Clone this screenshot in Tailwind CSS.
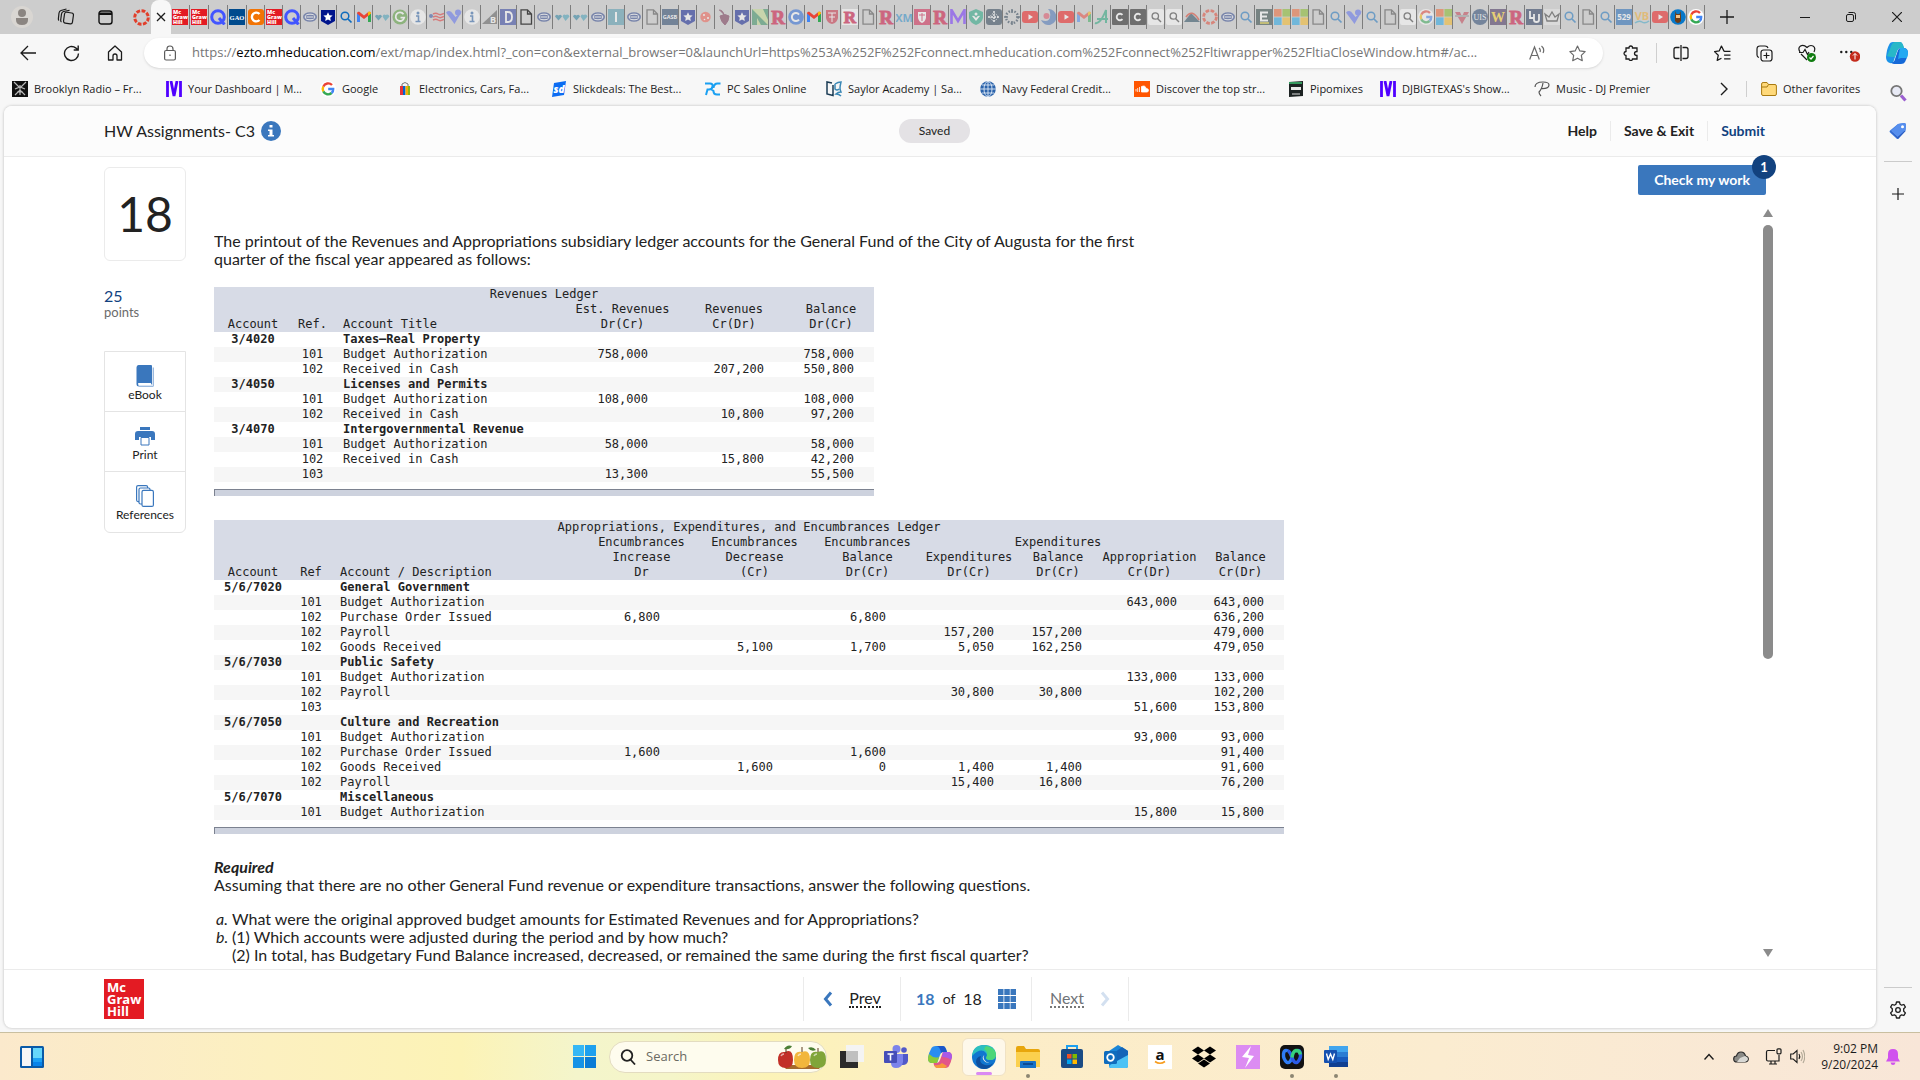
<!DOCTYPE html>
<html lang="en">
<head>
    <meta charset="UTF-8">
    <meta name="viewport" content="width=device-width, initial-scale=1.0">
    <title>HW Assignments- C3</title>
    <script src="https://cdn.jsdelivr.net/npm/@tailwindcss/browser@4"></script>
</head>
<body class="flex h-screen flex-col overflow-hidden bg-[#f7f7f7] font-['Open_Sans',sans-serif] text-[11px] text-[#1b1b1b]">

    <!-- Favicon sprite -->
    <svg class="hidden">
        <symbol id="mgh" viewBox="0 0 16 16"><rect width="16" height="16" fill="#e31b23"/><g fill="#fff" font-family="Open Sans" font-weight="800" font-size="5.4"><text x="1" y="5">Mc</text><text x="1" y="10">Graw</text><text x="1" y="15">Hill</text></g></symbol>
        <symbol id="canvas" viewBox="0 0 16 16"><circle cx="8" cy="8" r="6.4" fill="none" stroke="#e13f2b" stroke-width="2.8" stroke-dasharray="3.6 1.4"/></symbol>
        <symbol id="q" viewBox="0 0 16 16"><circle cx="8" cy="8" r="6.3" fill="none" stroke="#4255ff" stroke-width="3"/><path d="M9 9l5.5 6.5" stroke="#4255ff" stroke-width="3"/></symbol>
        <symbol id="gao" viewBox="0 0 16 16"><rect width="16" height="16" fill="#004b8d"/><text x="8" y="10.5" font-size="6.5" font-weight="700" font-family="Liberation Serif" fill="#fff" text-anchor="middle">GAO</text></symbol>
        <symbol id="corange" viewBox="0 0 16 16"><rect width="16" height="16" rx="3" fill="#f27405"/><path d="M11.5 5A4.4 4.4 0 1 0 11.5 11" fill="none" stroke="#fff" stroke-width="2.4"/></symbol>
        <symbol id="oval" viewBox="0 0 16 16"><ellipse cx="8" cy="8" rx="7" ry="4.8" fill="#27408b"/><ellipse cx="8" cy="8" rx="4.8" ry="2.8" fill="none" stroke="#fff"/><path d="M4.5 8h7" stroke="#fff"/></symbol>
        <symbol id="shield" viewBox="0 0 16 16"><path d="M1 1h14v11l-7 4-7-4z" fill="#00148c"/><path d="M8 3.2l1.4 3 3.2.4-2.4 2.2.6 3.2L8 10.400l-2.800 1.600.6-3.200L3.400 6.600l3.200-.4z" fill="#fff"/></symbol>
        <symbol id="search" viewBox="0 0 16 16"><circle cx="7" cy="7" r="3.800" fill="none" stroke="#0f6cbd" stroke-width="1.500"/><path d="M10 10l3.500 3.500" stroke="#0f6cbd" stroke-width="1.700"/></symbol>
        <symbol id="gmail" viewBox="0 0 16 16"><path d="M1 13V4l3 2v7z" fill="#4285f4"/><path d="M12 13V6l3-2v9z" fill="#34a853"/><path d="M1 4.500C1 2.500 3 2.500 4 3.200L8 6.500l4-3.300c1-.7 3-.7 3 1.300L12 7 8 10 4 7z" fill="#ea4335"/><path d="M12 3.200c1-.7 3-.7 3 1.300L12 7z" fill="#fbbc04"/></symbol>
        <symbol id="hearts" viewBox="0 0 16 16"><path d="M4.500 11.500L1 7.500Q2 4.500 4.500 6.500 7 4.500 8 7.500z" fill="#1d7a9c"/><path d="M11.500 12L8.500 7.500Q9.500 4.500 11.500 6 14.500 4.500 15.500 7.500z" fill="#3b9bb5"/></symbol>
        <symbol id="gg" viewBox="0 0 16 16"><circle cx="8" cy="8" r="7.500" fill="#4e9a2f"/><path d="M11.500 5.200A4.300 4.300 0 1 0 12.200 8.600H8.500" fill="none" stroke="#fff" stroke-width="1.800"/></symbol>
        <symbol id="ic" viewBox="0 0 16 16"><circle cx="8" cy="8" r="7.800" fill="#fff"/><circle cx="8" cy="4" r="1.500" fill="#265fa8"/><path d="M6 7h2.500v5.500M5.500 12.500h5" stroke="#265fa8" stroke-width="1.600" fill="none"/></symbol>
        <symbol id="flag" viewBox="0 0 16 16"><path d="M5 5q3-1.500 5 0t6-.500M5 8q3-1.500 5 0t6-.500M5 11q3-1.500 5 0t6-.500" stroke="#e02b2b" stroke-width="1.500" fill="none"/><circle cx="3" cy="7" r="2" fill="#2b4ba0"/></symbol>
        <symbol id="vp" viewBox="0 0 16 16"><path d="M0 3.500Q4 0 7 5l2.500 3L16 2 8.500 15z" fill="#5468f0"/><circle cx="12" cy="3.500" r="3" fill="#5468f0"/></symbol>
        <symbol id="tri" viewBox="0 0 16 16"><path d="M15 1v14H0z" fill="#555"/><text x="8" y="14" font-size="9" font-weight="700" fill="#fff">B</text></symbol>
        <symbol id="dd" viewBox="0 0 16 16"><rect width="16" height="16" fill="#26389c"/><path d="M5 3h3q4 0 4 5t-4 5H6V3" fill="none" stroke="#fff" stroke-width="1.800"/></symbol>
        <symbol id="doc" viewBox="0 0 16 16"><path d="M3 .8h6.500L13.500 5v10.200H3zM9.500.8V5h4" fill="none" stroke="#444" stroke-width="1.300"/></symbol>
        <symbol id="ii" viewBox="0 0 16 16"><rect width="16" height="16" fill="#4c97ad"/><path d="M8 3v10" stroke="#fff" stroke-width="2"/></symbol>
        <symbol id="gasb" viewBox="0 0 16 16"><rect width="16" height="16" fill="#1c3c63"/><text x="8" y="10" font-size="5.500" font-weight="700" fill="#fff" text-anchor="middle">GASB</text></symbol>
        <symbol id="cookie" viewBox="0 0 16 16"><circle cx="7.500" cy="8" r="5.200" fill="#f2594b"/><circle cx="6" cy="6" r="1" fill="#fff"/><circle cx="10" cy="9" r="1" fill="#fff"/><circle cx="6.500" cy="10.500" r=".8" fill="#fff"/></symbol>
        <symbol id="grapes" viewBox="0 0 16 16"><path d="M4 7q5-3 9 0 0 5-4 9-4-3-5-9zM3 1q4 0 5 5" fill="#702b4c" stroke="#702b4c"/></symbol>
        <symbol id="nn" viewBox="0 0 16 16"><rect width="16" height="16" fill="#c4dc8c"/><path d="M0 0l16 16H9L5 9v7H0zM11 0h5v11z" fill="#2f8a5b"/></symbol>
        <symbol id="rr" viewBox="0 0 16 16"><text x="8" y="15" font-size="19" font-weight="700" font-family="Liberation Serif" fill="#cc0033" stroke="#cc0033" text-anchor="middle">R</text></symbol>
        <symbol id="rbox" viewBox="0 0 16 16"><rect width="16" height="16" fill="#fff"/><text x="8" y="14" font-size="17" font-weight="700" font-family="Liberation Serif" fill="#cc0033" stroke="#cc0033" text-anchor="middle">R</text></symbol>
        <symbol id="cblue" viewBox="0 0 16 16"><circle cx="8" cy="8" r="7.800" fill="#1f63d8"/><path d="M11 5.500A4 4 0 1 0 11 10.500" stroke="#fff" stroke-width="2" fill="none"/></symbol>
        <symbol id="crest" viewBox="0 0 16 16"><path d="M2 1h12v8q-1 5-6 6-5-1-6-6z" fill="#c8233c"/><path d="M4 4h8M8 4v9M5 8h6" stroke="#fff"/></symbol>
        <symbol id="crestbox" viewBox="0 0 16 16"><rect width="16" height="16" fill="#cf1747"/><path d="M4 3h8v6q-1 4-4 5-3-1-4-5z" fill="#fff"/><path d="M5 6h6M8 4v8" stroke="#cf1747"/></symbol>
        <symbol id="xm" viewBox="0 0 16 16"><text x="8" y="12.500" font-size="11" font-weight="700" fill="#1e88c9" text-anchor="middle">XM</text></symbol>
        <symbol id="mm" viewBox="0 0 16 16"><path d="M1.500 15V1l6.500 11L14.500 1v14" stroke="#6a23ff" stroke-width="2.600" fill="none"/></symbol>
        <symbol id="mixcloud" viewBox="0 0 16 16"><path d="M1.500 16V0M5 0l3 15 3-15M14.500 0v16" stroke="#5000ff" stroke-width="2.800" fill="none"/></symbol>
        <symbol id="tshield" viewBox="0 0 16 16"><path d="M8 0l7 3v6q-1 5-7 7-6-2-7-7V3z" fill="#1aa27c"/><path d="M8 12L4 7q2-1 4 2 2-3 4-2z" fill="#fff"/><circle cx="8" cy="5" r="1.500" fill="#fff"/></symbol>
        <symbol id="compassbox" viewBox="0 0 16 16"><rect width="16" height="16" rx="3" fill="#22384d"/><path d="M8 2v12M2 8h12" stroke="#fff" stroke-width="1.500" stroke-dasharray="2 1"/><circle cx="8" cy="8" r="3.500" fill="none" stroke="#fff" stroke-dasharray="1 1"/></symbol>
        <symbol id="compass" viewBox="0 0 16 16"><circle cx="8" cy="8" r="6" fill="none" stroke="#22384d" stroke-width="2.400" stroke-dasharray="1.500 1.500"/><path d="M8 0v4M8 12v4M0 8h4M12 8h4" stroke="#22384d" stroke-width="1.500"/></symbol>
        <symbol id="yt" viewBox="0 0 16 16"><rect y="2" width="16" height="12" rx="3" fill="#f00c0c"/><path d="M6.500 5.200L11 8l-4.500 2.800z" fill="#fff"/></symbol>
        <symbol id="swirl" viewBox="0 0 16 16"><path d="M8 0a8 8 0 1 1-7 11q8 3 9-3t-2-8z" fill="#3f6cb5"/><circle cx="6.500" cy="7" r="3" fill="#e0495e"/></symbol>
        <symbol id="aa" viewBox="0 0 16 16"><path d="M1 14q5 2 11-13v13M3 10h11" stroke="#19a074" stroke-width="2" fill="none"/></symbol>
        <symbol id="cdark" viewBox="0 0 16 16"><rect width="16" height="16" rx="1" fill="#111"/><path d="M10.500 5.800A3.300 3.300 0 1 0 10.500 10.200" stroke="#fff" stroke-width="1.900" fill="none"/></symbol>
        <symbol id="sbox" viewBox="0 0 16 16"><rect width="16" height="16" rx="2" fill="#fff"/><circle cx="7.300" cy="7" r="3.200" fill="none" stroke="#333" stroke-width="1.300"/><path d="M9.500 9.500l3.500 3.500" stroke="#333" stroke-width="1.400"/></symbol>
        <symbol id="mount" viewBox="0 0 16 16"><path d="M0 13L7 4l9 9z" fill="#1c4257"/><path d="M2 8q6-9 13 3" stroke="#dc3520" stroke-width="1.500" fill="none"/></symbol>
        <symbol id="ee" viewBox="0 0 16 16"><rect width="16" height="16" fill="#233b3a"/><path d="M12 3.500H5v8h7M5 7.500h6" stroke="#fff" stroke-width="2" fill="none"/><path d="M4 14h9" stroke="#e8d51f" stroke-width="1.500"/></symbol>
        <symbol id="ms" viewBox="0 0 16 16"><path fill="#f0602c" d="M0 0h7.600v7.600H0z"/><path fill="#80b81c" d="M8.400 0H16v7.600H8.400z"/><path fill="#18a3e8" d="M0 8.400h7.600V16H0z"/><path fill="#fab819" d="M8.400 8.400H16V16H8.400z"/></symbol>
        <symbol id="google" viewBox="0 0 16 16"><circle cx="8" cy="8" r="8" fill="#fff"/><g fill="none" stroke-width="2.400"><path d="M12 4A5.300 5.300 0 0 0 3.300 5.600" stroke="#ea4335"/><path d="M3.300 5.600a5.300 5.300 0 0 0 0 4.800" stroke="#fbbc05"/><path d="M3.300 10.400a5.300 5.300 0 0 0 8.300 1.600" stroke="#34a853"/><path d="M11.600 12A5 5 0 0 0 13.200 8H8.200" stroke="#4285f4"/></g></symbol>
        <symbol id="vred" viewBox="0 0 16 16"><path d="M1 3h5l2 5 2-5h5L8 15z" fill="#c23a4c"/><path d="M1 7h14" stroke="#999" stroke-width="2"/></symbol>
        <symbol id="uis" viewBox="0 0 16 16"><circle cx="8" cy="8" r="8" fill="#1d3e6b"/><text x="8" y="11" font-size="8" font-family="Liberation Serif" fill="#fff" text-anchor="middle">UIS</text></symbol>
        <symbol id="ww" viewBox="0 0 16 16"><rect width="16" height="16" fill="#3a2355"/><text x="8" y="13" font-size="14" font-weight="700" font-family="Liberation Serif" fill="#ffd21f" text-anchor="middle">W</text></symbol>
        <symbol id="lu" viewBox="0 0 16 16"><rect width="16" height="16" fill="#182c53"/><path d="M4 2v7h4M8 5v6q0 2 2.500 2T13 11V5" stroke="#fff" stroke-width="1.800" fill="none"/></symbol>
        <symbol id="crown" viewBox="0 0 16 16"><rect width="16" height="16" fill="#e8e8e8"/><path d="M3 12L1 5l4 3 3-5 3 5 4-3-2 7z" fill="none" stroke="#333" stroke-width="1.300"/></symbol>
        <symbol id="n529" viewBox="0 0 16 16"><rect width="16" height="16" fill="#1461b5"/><text x="8" y="11" font-size="8" font-weight="700" fill="#fff" text-anchor="middle">529</text></symbol>
        <symbol id="vb" viewBox="0 0 16 16"><text x="8" y="11" font-size="11" font-weight="700" fill="#f3aa28" text-anchor="middle">VB</text><path d="M1 14q4-3 7-1t7-1" stroke="#3ba6c9" stroke-width="1.500" fill="none"/></symbol>
        <symbol id="face" viewBox="0 0 16 16"><circle cx="8" cy="8" r="7.800" fill="#0878c9"/><path d="M5.500 2l1 3h3l1-3 .5 5v5q-3 4-6 0V7z" fill="#6e3d16"/><path d="M6 6h4v3H6z" fill="#f0c38a"/></symbol>
    </svg>

    <!-- Tab strip -->
    <header class="flex h-[34px] shrink-0 items-stretch bg-[#cdcdcd]">
        <div class="flex w-[131px] items-center justify-between pr-[18px] pl-[11px]">
            <button aria-label="Profile"><svg class="size-[22px]" viewBox="0 0 22 22"><circle cx="11" cy="11" r="11" fill="#d9d6d2"/><circle cx="11" cy="7" r="4" fill="#8b8581"/><path d="M5 12h12v2q0 5-6 5t-6-5z" fill="#8b8581"/></svg></button>
            <button aria-label="Workspaces"><svg class="size-[18px]" viewBox="0 0 18 18" fill="none" stroke="#1b1b1b" stroke-width="1.200"><rect x="7" y="4.500" width="9" height="11" rx="2" transform="rotate(8 11 10)"/><path d="M4.500 14q-1-.500-.8-2l.8-6q.3-2 2-2.500l6-1.200M2 12.500q-.8-.5-.6-2L2 5q.3-2 2-2.500L9.500 1"/></svg></button>
            <button aria-label="Tab actions"><svg class="size-[15px]" viewBox="0 0 15 15"><rect x="1" y="1" width="13" height="13" rx="2.500" fill="none" stroke="#111" stroke-width="1.400"/><path d="M1 2.500h13v2.500H1zM1 5h2.500v0H1z" fill="#111"/><path d="M4.500 5v0" stroke="#111"/></svg></button>
        </div>
        <button class="flex w-5 items-center justify-center border-l border-transparent" aria-label="Canvas"><svg class="size-[17px]"><use href="#canvas"/></svg></button>
        <button class="flex w-5 items-center justify-center rounded-t-lg bg-[#f7f7f7]" aria-label="Close tab"><svg class="size-2.5" viewBox="0 0 10 10" stroke="#1b1b1b" stroke-width="1.300"><path d="M1 1l8 8M9 1L1 9"/></svg></button>
        <nav id="tabs" class="flex items-center"></nav>
        <button class="ml-3 flex w-5 items-center justify-center" aria-label="New tab"><svg class="size-3.5" viewBox="0 0 14 14" stroke="#1b1b1b" stroke-width="1.300"><path d="M7 0v14M0 7h14"/></svg></button>
        <div class="ml-auto flex">
            <button class="flex w-[46px] items-center justify-center" aria-label="Minimize"><svg class="w-2.5" viewBox="0 0 10 10" stroke="#1b1b1b"><path d="M0 5.500h10"/></svg></button>
            <button class="flex w-[46px] items-center justify-center" aria-label="Restore"><svg class="w-2.5" viewBox="0 0 10 10" fill="none" stroke="#1b1b1b"><rect x=".5" y="2.500" width="7" height="7" rx="1.500"/><path d="M2.500.5h5q2 0 2 2v5"/></svg></button>
            <button class="flex w-[46px] items-center justify-center" aria-label="Close"><svg class="w-2.5" viewBox="0 0 10 10" stroke="#1b1b1b" stroke-width="1.200"><path d="M0 0l10 10M10 0L0 10"/></svg></button>
        </div>
    </header>

    <!-- Toolbar -->
    <div class="flex h-[38px] shrink-0 items-center">
        <div class="flex w-36 items-center gap-[27px] pl-5">
            <button aria-label="Back"><svg class="size-4" viewBox="0 0 16 16" fill="none" stroke="#1b1b1b" stroke-width="1.300"><path d="M16 8H1M8 1L1 8l7 7"/></svg></button>
            <button aria-label="Refresh"><svg class="size-[17px]" viewBox="0 0 17 17" fill="none" stroke="#1b1b1b" stroke-width="1.400"><path d="M15.500 8.500A7 7 0 1 1 13 3.100L15 5M15.200.5V5h-4.500"/></svg></button>
            <button aria-label="Home"><svg class="size-4" viewBox="0 0 16 16" fill="none" stroke="#1b1b1b" stroke-width="1.300"><path d="M1.500 7L8 1l6.500 6v8H10v-4q0-2-2-2t-2 2v4H1.500z" stroke-linejoin="round"/></svg></button>
        </div>
        <div class="flex h-[30px] min-w-0 flex-1 items-center rounded-full bg-white pr-[17px] pl-5 shadow-sm">
            <svg class="mr-4 h-4 w-3" viewBox="0 0 12 16" fill="none" stroke="#5b5b5b" stroke-width="1.200"><rect x=".6" y="5.500" width="10.800" height="9.500" rx="1.500"/><path d="M3 5.500V4q0-3 3-3t3 3v1.500M6 9.500v1.500"/></svg>
            <div class="min-w-0 flex-1 truncate text-[13px] text-[#767676]">https://<span class="text-black">ezto.mheducation.com</span>/ext/map/index.html?_con=con&amp;external_browser=0&amp;launchUrl=https%253A%252F%252Fconnect.mheducation.com%252Fconnect%252Fltiwrapper%252FltiaCloseWindow.htm#/ac...</div>
            <button class="mr-6" aria-label="Read aloud"><svg class="size-4" viewBox="0 0 16 16" fill="none" stroke="#6a6a6a" stroke-width="1.200"><path d="M.7 14.500L5.500 2l4.800 12.500M2.300 10.500h6.400M10 3q2 1.500 1 4M12.500 1q3.500 3 1.500 7"/></svg></button>
            <button aria-label="Favorite"><svg class="size-[17px]" viewBox="0 0 16 16" fill="none" stroke="#6a6a6a" stroke-width="1.100" stroke-linejoin="round"><path d="M8 1l2.200 4.600 5 .7-3.600 3.500.9 5L8 12.400l-4.500 2.400.9-5L.8 6.300l5-.7z"/></svg></button>
        </div>
        <div class="flex w-[317px] items-center justify-between pr-[11px] pl-5">
            <button aria-label="Extensions"><svg class="size-4" viewBox="0 0 16 16" fill="none" stroke="#1b1b1b" stroke-width="1.300"><path d="M3 3h3q0-2 1.800-2T9.500 3H14v3.500q-2.500 0-2.500 2t2.500 2V14H9.500q0 1.500-1.700 1.500T6 14H3v-3.500q-2-.2-2-2t2-2z"/></svg></button>
            <span class="h-5 w-px bg-[#cfcfcf]"></span>
            <button aria-label="Split screen"><svg class="size-4" viewBox="0 0 16 16" fill="none" stroke="#1b1b1b" stroke-width="1.300"><path d="M6.500 2.500H3q-2 0-2 2v7q0 2 2 2h3.500M9.500 2.500H13q2 0 2 2v7q0 2-2 2H9.500M8 0v16"/></svg></button>
            <button class="ml-2" aria-label="Favorites"><svg class="size-[17px]" viewBox="0 0 16 16" fill="none" stroke="#1b1b1b" stroke-width="1.200" stroke-linejoin="round"><path d="M9.500 6L7 1 5 5.500l-4.500.700L4 9.700 3 14.500l4-2M9.500 6H15.500M9.500 9.500h6M9.500 13h6"/></svg></button>
            <button class="ml-2" aria-label="Collections"><svg class="size-[17px]" viewBox="0 0 17 17" fill="none" stroke="#1b1b1b" stroke-width="1.200"><rect x="5" y="5" width="11" height="11" rx="2.500"/><path d="M10.500 7.500v6M7.500 10.500h6M3 12.500q-2-.5-2-2.500V4q0-3 3-3h5q2.500 0 3 2"/></svg></button>
            <button class="relative ml-2" aria-label="Browser essentials"><svg class="size-[18px]" viewBox="0 0 18 18" fill="none" stroke="#1b1b1b" stroke-width="1.200"><path d="M2 8Q-.5 4 2.500 2T9 3.500Q12 .5 15 2t1 6M1 8.500h4L7 5.500l2.500 5L11 8M3 10l6 6"/><circle cx="13.500" cy="13.500" r="4.500" fill="#107c10" stroke="none"/><path d="M11.500 13.500l1.500 1.500 2.500-3" stroke="#fff"/></svg></button>
            <button class="ml-2" aria-label="More"><svg class="h-[17px] w-5" viewBox="0 0 20 17"><g fill="#1b1b1b"><circle cx="1.300" cy="7" r="1.200"/><circle cx="6.300" cy="7" r="1.200"/><circle cx="11.300" cy="7" r="1.200"/></g><circle cx="15" cy="11.500" r="5.200" fill="#c42b1c"/><path d="M15 14.500v-6M13 10.500l2-2 2 2" fill="none" stroke="#fff"/></svg></button>
            <button class="ml-2" aria-label="Copilot"><svg class="size-6" viewBox="0 0 24 24"><path d="M8 1h7q2 0 3 3l1 3h-4q-2 0-3 3L9 19q-1 4-4 3-4-1-4-6 1-9 3-12 1-3 4-3z" fill="#1b93e8"/><path d="M5 8q2-7 5-7h5q2 0 3 3l1 3h-4q-2 0-3 3l-2 6q-6 0-8-1z" fill="#28b8c8"/><path d="M16 23H9q-2 0-3-2 3 1 4-3l3-9q1-2 3-2h4q3 1 3 5-1 6-3 9-1 2-4 2z" fill="#1569d8"/><path d="M15 7h4q4 1 4 5 0 2-1 5h-6l-3 1z" fill="#23a9f2"/></svg></button>
        </div>
    </div>

    <div class="flex min-h-0 flex-1">
        <div class="flex min-w-0 flex-1 flex-col">
            <!-- Bookmarks bar -->
            <nav class="flex h-[34px] shrink-0 items-center pl-3 [&>a]:flex [&>a]:w-[154px] [&>a]:items-center [&>a]:gap-1.5 [&>a]:whitespace-nowrap [&_svg]:size-4 [&_svg]:shrink-0">
                <a href="#"><svg viewBox="0 0 16 16"><rect width="16" height="16" fill="#111"/><path d="M2 1l6 6 6-6M3 8l5-2 5 2M3 14l5-5 5 5M8 4v10M5 11h6" stroke="#bbb" stroke-width="1.200" fill="none"/></svg>Brooklyn Radio – Fr...</a>
                <a href="#"><svg><use href="#mixcloud"/></svg>Your Dashboard | M...</a>
                <a href="#" class="w-[77px]!"><svg><use href="#google"/></svg>Google</a>
                <a href="#"><svg viewBox="0 0 16 16"><path d="M5 5V3q3-3 6 0v2" fill="none" stroke="#777"/><path d="M3 5h3v9H3z" fill="#e53238"/><path d="M6 5h2.500v9H6z" fill="#0064d2"/><path d="M8.500 5H11v9H8.500z" fill="#f5af02"/><path d="M11 5h2v9h-2z" fill="#86b817"/></svg>Electronics, Cars, Fa...</a>
                <a href="#"><svg viewBox="0 0 16 16"><path d="M3 2l12-2-2 14-12 2z" fill="#0c6cf2"/><text x="8" y="12" font-size="10" font-weight="800" font-style="italic" fill="#fff" text-anchor="middle">sd</text></svg>Slickdeals: The Best...</a>
                <a href="#" class="w-[121px]!"><svg viewBox="0 0 16 16"><path d="M0 2.500h5q3 0 2.500 3T4 8.500H2.500L1 14M15.500 2.500h-3q-3.500 0-4 4.500M15 13.500h-3q-3.500 0-3.500-3.500L6 8" stroke="#1aa0f2" stroke-width="2" fill="none"/></svg>PC Sales Online</a>
                <a href="#"><svg viewBox="0 0 16 16" fill="none" stroke-width="1.500"><path d="M6 2L1 1v12l6 1.500V4" stroke="#1b3c55"/><path d="M9 3q3-2 6-2-1 4-1 6t1 4q-3 0-5 2 3 0 5 2M9 3v5q2 2 4 0" stroke="#3b88b5"/></svg>Saylor Academy | Sa...</a>
                <a href="#"><svg viewBox="0 0 16 16"><circle cx="8" cy="8" r="7.800" fill="#2b63ab"/><path d="M8 0v16M0 8h16M2 4h12M2 12h12" stroke="#dce8f5" stroke-width=".9"/><ellipse cx="8" cy="8" rx="4" ry="7.500" fill="none" stroke="#dce8f5" stroke-width=".9"/></svg>Navy Federal Credit...</a>
                <a href="#"><svg viewBox="0 0 16 16"><rect width="16" height="16" fill="#ff5500"/><path d="M7.500 5.500q4-1.500 4.500 2 2.500 0 2.500 1.700T13 11H7.500zM2 8v2.500M3.700 7v4M5.500 6v5" fill="#fff" stroke="#fff" stroke-width=".8"/></svg>Discover the top str...</a>
                <a href="#" class="w-[92px]!"><svg viewBox="0 0 16 16"><path d="M1 1l14-1v15L1 16z" fill="#1c2222"/><path d="M1 2h13" stroke="#3dbf72" stroke-width="1.500"/><path d="M3 6h10v3H3z" fill="#e8e8e8"/><path d="M4 13h8" stroke="#ddd"/></svg>Pipomixes</a>
                <a href="#"><svg><use href="#mixcloud"/></svg>DJBIGTEXAS's Show...</a>
                <a href="#"><svg viewBox="0 0 16 16" fill="none" stroke="#555" stroke-width="1.200"><path d="M1 6Q1 1 9 1q6 0 6 3 0 4-8 3.500M9 2Q8 8 5 11q0 2 2 4"/></svg>Music - DJ Premier</a>
                <button class="ml-auto" aria-label="More bookmarks"><svg viewBox="0 0 16 16" fill="none" stroke="#1b1b1b" stroke-width="1.400"><path d="M5 2l6 6-6 6"/></svg></button>
                <span class="mx-3.5 h-4 w-px bg-[#cfcfcf]"></span>
                <a href="#" class="w-[115px]!"><svg viewBox="0 0 16 16"><path d="M.6 3q0-1.500 1.500-1.500H6L7.500 3.500H14q1.400 0 1.400 1.500v8q0 1.500-1.400 1.500H2q-1.400 0-1.400-1.500z" fill="#ffd97a" stroke="#a97a10"/><path d="M.6 6H6l1.500-2.500" fill="none" stroke="#a97a10"/></svg>Other favorites</a>
            </nav>

            <!-- Page -->
            <main class="mb-1 ml-1 flex min-h-0 flex-1 flex-col overflow-hidden rounded-lg bg-white font-['Lato',sans-serif] text-base text-[#222] shadow-[0_0_3px_rgba(0,0,0,0.25)]">
                <div class="flex h-[51px] shrink-0 items-center border-b border-[#ebebeb] bg-[#fcfcfc] pr-[111px] pl-[100px]">
                    <div class="flex flex-1 items-center gap-1.5">
                        <h1>HW Assignments- C3</h1>
                        <svg class="size-5" viewBox="0 0 20 20"><circle cx="10" cy="10" r="10" fill="#3a77bd"/><path d="M8.500 4h3v2.500h-3zM7 8.500h4.500v5.500H13v1.500H7V14h1.500v-4H7z" fill="#fff"/></svg>
                    </div>
                    <span class="rounded-full bg-[#e4e2e5] px-5 py-1 text-xs leading-4">Saved</span>
                    <div class="flex flex-1 items-center justify-end gap-[13px] text-sm font-bold">
                        <a href="#">Help</a>
                        <span class="h-5 w-px bg-[#ebebeb]"></span>
                        <a href="#">Save &amp; Exit</a>
                        <span class="h-5 w-px bg-[#ebebeb]"></span>
                        <a href="#" class="text-[#12427f]">Submit</a>
                    </div>
                </div>

                <div class="flex min-h-0 flex-1 pr-[101px] pl-[100px]">
                    <!-- Question rail -->
                    <aside class="w-[82px] shrink-0 pt-2.5">
                        <div class="flex h-[94px] items-center justify-center rounded-md border border-[#ebebeb] text-5xl">18</div>
                        <div class="mt-[27px] text-base leading-4 text-[#12427f]">25</div>
                        <div class="text-[13px] leading-4 text-[#6b6b6b]">points</div>
                        <div class="mt-[31px] divide-y divide-[#e4e4e4] rounded-b-md border border-[#e4e4e4] text-xs [&>button]:flex [&>button]:h-[60px] [&>button]:w-full [&>button]:flex-col [&>button]:items-center [&>button]:justify-center [&>button]:pt-1">
                            <button><svg class="h-[22px] w-[18px]" viewBox="0 0 18 22"><path d="M2.500 0H15q1 0 1 1v17H3q-1 0-1 1t1 1h13M17.500 2.500V21.500H3Q.5 21.500.5 19V2.500Q.5 0 2.500 0z" fill="#3a77bd"/><path d="M2.500 18.500H15M2.500 20.500H16M16.500 1v20" stroke="#fff" stroke-width=".8"/></svg>eBook</button>
                            <button><svg class="h-[22px] w-5" viewBox="0 0 20 22"><path d="M5 2h10v3H5zM0 9q0-3 3-3h14q3 0 3 3v6h-4v-3H4v3H0z" fill="#3a77bd"/><path d="M6 12.500h8V20H6z" fill="#fff" stroke="#3a77bd"/></svg>Print</button>
                            <button><svg class="h-[22px] w-[18px]" viewBox="0 0 18 22" fill="#fff" stroke="#3a77bd" stroke-width="1.200"><rect x=".6" y=".6" width="11" height="16" rx="1.500"/><rect x="3" y="3" width="11" height="16" rx="1.500"/><rect x="6" y="5.400" width="11.400" height="16" rx="1.500"/></svg>References</button>
                        </div>
                    </aside>

                    <div class="flex min-w-0 flex-1 flex-col pl-7">
                        <div class="flex shrink-0 justify-end pt-2 pr-[9px]">
                            <button class="relative h-[30px] rounded-xs bg-[#3a77bd] px-4 text-sm font-bold text-white">Check my work<span class="absolute -top-2.5 -right-2.5 flex size-6 items-center justify-center rounded-full bg-[#12427f] text-[13px]">1</span></button>
                        </div>
                        <div class="flex min-h-0 flex-1 pt-2">
                            <article class="min-w-0 flex-1 overflow-hidden pt-[29px] leading-[18px]">
                                <p class="max-w-[940px]">The printout of the Revenues and Appropriations subsidiary ledger accounts for the General Fund of the City of Augusta for the first quarter of the fiscal year appeared as follows:</p>

                                <table class="mt-[19px] w-[660px] table-fixed font-['DejaVu_Sans_Mono',monospace] text-xs leading-[15px] whitespace-nowrap [&_tbody_td:nth-child(-n+2)]:text-center [&_tbody_td:nth-child(3)]:pl-2.5 [&_tbody_td:nth-child(4)]:pr-8 [&_tbody_td:nth-child(5)]:pr-6 [&_tbody_td:nth-child(6)]:pr-5 [&_tbody_td:nth-child(n+4)]:text-right [&_th]:font-normal [&_tr]:h-[15px]">
                                    <colgroup><col class="w-[78px]"><col class="w-[41px]"><col class="w-[232px]"><col class="w-[115px]"><col class="w-[108px]"><col class="w-[86px]"></colgroup>
                                    <thead class="bg-[#d7dbe6]">
                                        <tr><th colspan="6">Revenues Ledger</th></tr>
                                        <tr><th></th><th></th><th></th><th>Est. Revenues</th><th>Revenues</th><th>Balance</th></tr>
                                        <tr><th>Account</th><th>Ref.</th><th class="pl-2.5 text-left">Account Title</th><th>Dr(Cr)</th><th>Cr(Dr)</th><th>Dr(Cr)</th></tr>
                                    </thead>
                                    <tbody class="[&>tr:nth-child(even)]:bg-[#f6f6f6]">
                                        <tr class="font-bold"><td>3/4020</td><td></td><td>Taxes—Real Property</td><td></td><td></td><td></td></tr>
                                        <tr><td></td><td>101</td><td>Budget Authorization</td><td>758,000</td><td></td><td>758,000</td></tr>
                                        <tr><td></td><td>102</td><td>Received in Cash</td><td></td><td>207,200</td><td>550,800</td></tr>
                                        <tr class="font-bold"><td>3/4050</td><td></td><td>Licenses and Permits</td><td></td><td></td><td></td></tr>
                                        <tr><td></td><td>101</td><td>Budget Authorization</td><td>108,000</td><td></td><td>108,000</td></tr>
                                        <tr><td></td><td>102</td><td>Received in Cash</td><td></td><td>10,800</td><td>97,200</td></tr>
                                        <tr class="font-bold"><td>3/4070</td><td></td><td>Intergovernmental Revenue</td><td></td><td></td><td></td></tr>
                                        <tr><td></td><td>101</td><td>Budget Authorization</td><td>58,000</td><td></td><td>58,000</td></tr>
                                        <tr><td></td><td>102</td><td>Received in Cash</td><td></td><td>15,800</td><td>42,200</td></tr>
                                        <tr><td></td><td>103</td><td></td><td>13,300</td><td></td><td>55,500</td></tr>
                                    </tbody>
                                </table>
                                <div class="mt-[7px] h-[7px] w-[660px] border-t border-l border-[#7c8290] bg-[#cdd2de]"></div>

                                <table class="mt-6 w-[1070px] table-fixed font-['DejaVu_Sans_Mono',monospace] text-xs leading-[15px] whitespace-nowrap [&_tbody_td:nth-child(-n+2)]:text-center [&_tbody_td:nth-child(3)]:pl-2.5 [&_tbody_td:nth-child(n+4)]:pr-[38px] [&_tbody_td:nth-child(n+4)]:text-right [&_tbody_td:nth-child(n+7)]:pr-5 [&_th]:font-normal [&_tr]:h-[15px]">
                                    <colgroup><col class="w-[78px]"><col class="w-[38px]"><col class="w-[255px]"><col class="w-[113px]"><col class="w-[113px]"><col class="w-[113px]"><col class="w-[90px]"><col class="w-[88px]"><col class="w-[95px]"><col class="w-[87px]"></colgroup>
                                    <thead class="bg-[#d7dbe6]">
                                        <tr><th colspan="10">Appropriations, Expenditures, and Encumbrances Ledger</th></tr>
                                        <tr><th></th><th></th><th></th><th>Encumbrances</th><th>Encumbrances</th><th>Encumbrances</th><th></th><th>Expenditures</th><th></th><th></th></tr>
                                        <tr><th></th><th></th><th></th><th>Increase</th><th>Decrease</th><th>Balance</th><th>Expenditures</th><th>Balance</th><th>Appropriation</th><th>Balance</th></tr>
                                        <tr><th>Account</th><th>Ref</th><th class="pl-2.5 text-left">Account / Description</th><th>Dr</th><th>(Cr)</th><th>Dr(Cr)</th><th>Dr(Cr)</th><th>Dr(Cr)</th><th>Cr(Dr)</th><th>Cr(Dr)</th></tr>
                                    </thead>
                                    <tbody class="[&>tr:nth-child(even)]:bg-[#f6f6f6]">
                                        <tr class="font-bold"><td>5/6/7020</td><td></td><td>General Government</td><td></td><td></td><td></td><td></td><td></td><td></td><td></td></tr>
                                        <tr><td></td><td>101</td><td>Budget Authorization</td><td></td><td></td><td></td><td></td><td></td><td>643,000</td><td>643,000</td></tr>
                                        <tr><td></td><td>102</td><td>Purchase Order Issued</td><td>6,800</td><td></td><td>6,800</td><td></td><td></td><td></td><td>636,200</td></tr>
                                        <tr><td></td><td>102</td><td>Payroll</td><td></td><td></td><td></td><td>157,200</td><td>157,200</td><td></td><td>479,000</td></tr>
                                        <tr><td></td><td>102</td><td>Goods Received</td><td></td><td>5,100</td><td>1,700</td><td>5,050</td><td>162,250</td><td></td><td>479,050</td></tr>
                                        <tr class="font-bold"><td>5/6/7030</td><td></td><td>Public Safety</td><td></td><td></td><td></td><td></td><td></td><td></td><td></td></tr>
                                        <tr><td></td><td>101</td><td>Budget Authorization</td><td></td><td></td><td></td><td></td><td></td><td>133,000</td><td>133,000</td></tr>
                                        <tr><td></td><td>102</td><td>Payroll</td><td></td><td></td><td></td><td>30,800</td><td>30,800</td><td></td><td>102,200</td></tr>
                                        <tr><td></td><td>103</td><td></td><td></td><td></td><td></td><td></td><td></td><td>51,600</td><td>153,800</td></tr>
                                        <tr class="font-bold"><td>5/6/7050</td><td></td><td>Culture and Recreation</td><td></td><td></td><td></td><td></td><td></td><td></td><td></td></tr>
                                        <tr><td></td><td>101</td><td>Budget Authorization</td><td></td><td></td><td></td><td></td><td></td><td>93,000</td><td>93,000</td></tr>
                                        <tr><td></td><td>102</td><td>Purchase Order Issued</td><td>1,600</td><td></td><td>1,600</td><td></td><td></td><td></td><td>91,400</td></tr>
                                        <tr><td></td><td>102</td><td>Goods Received</td><td></td><td>1,600</td><td>0</td><td>1,400</td><td>1,400</td><td></td><td>91,600</td></tr>
                                        <tr><td></td><td>102</td><td>Payroll</td><td></td><td></td><td></td><td>15,400</td><td>16,800</td><td></td><td>76,200</td></tr>
                                        <tr class="font-bold"><td>5/6/7070</td><td></td><td>Miscellaneous</td><td></td><td></td><td></td><td></td><td></td><td></td><td></td></tr>
                                        <tr><td></td><td>101</td><td>Budget Authorization</td><td></td><td></td><td></td><td></td><td></td><td>15,800</td><td>15,800</td></tr>
                                    </tbody>
                                </table>
                                <div class="mt-[7px] h-[7px] w-[1070px] border-t border-l border-[#7c8290] bg-[#cdd2de]"></div>

                                <p class="mt-6"><b><i>Required</i></b><br>Assuming that there are no other General Fund revenue or expenditure transactions, answer the following questions.</p>
                                <div class="mt-4 grid grid-cols-[18px_1fr]">
                                    <i class="pl-0.5">a.</i><span>What were the original approved budget amounts for Estimated Revenues and for Appropriations?</span>
                                    <i class="pl-0.5">b.</i><span>(1) Which accounts were adjusted during the period and by how much?<br>(2) In total, has Budgetary Fund Balance increased, decreased, or remained the same during the first fiscal quarter?</span>
                                </div>
                            </article>
                            <!-- Scrollbar -->
                            <div class="flex w-3.5 shrink-0 flex-col items-center pt-1.5 pb-3">
                                <svg class="h-2 w-2.5" viewBox="0 0 10 8"><path d="M5 0l5 8H0z" fill="#8b8b8b"/></svg>
                                <div class="mt-2 flex w-2.5 flex-1 flex-col"><div class="h-[60%] rounded-full bg-[#8b8b8b]"></div></div>
                                <svg class="h-2 w-2.5" viewBox="0 0 10 8"><path d="M0 0h10L5 8z" fill="#8b8b8b"/></svg>
                            </div>
                        </div>
                    </div>
                </div>

                <!-- Question navigation -->
                <footer class="flex h-[59px] shrink-0 items-center border-t border-[#ebebeb] pl-[100px]">
                    <svg class="size-10" viewBox="0 0 40 40"><rect width="40" height="40" fill="#e31b23"/><g fill="#fff" font-family="Open Sans" font-weight="700" font-size="13"><text x="3" y="13">Mc</text><text x="3" y="25">Graw</text><text x="3" y="37">Hill</text></g></svg>
                    <div class="ml-[659px] flex h-11 divide-x divide-[#ebebeb] border-x border-[#ebebeb] [&>*]:flex [&>*]:items-center">
                        <button class="w-[97px] justify-center gap-4"><svg class="h-4 w-2.5" viewBox="0 0 10 16" fill="none" stroke="#3a77bd" stroke-width="3"><path d="M8 1.500L2.500 8 8 14.500"/></svg><span class="border-b-2 border-dotted border-[#222] leading-4">Prev</span></button>
                        <div class="w-[131px] justify-center gap-2"><b class="text-[#3a77bd]">18</b><span class="text-sm">of</span><span class="mr-2">18</span><svg class="h-5 w-[18px]" viewBox="0 0 18 20" fill="#3a77bd"><path d="M0 0h5.500v6H0zM6.300 0h5.500v6H6.300zM12.500 0H18v6h-5.500zM0 7h5.500v6H0zM6.300 7h5.500v6H6.300zM12.500 7H18v6h-5.500zM0 14h5.500v6H0zM6.300 14h5.500v6H6.300zM12.500 14H18v6h-5.500z"/></svg></div>
                        <button class="w-24 justify-center gap-4 text-[#6f7378]"><span class="border-b-2 border-dotted border-[#777] leading-4">Next</span><svg class="h-4 w-2.5" viewBox="0 0 10 16" fill="none" stroke="#d3e0f0" stroke-width="3"><path d="M2 1.500L7.500 8 2 14.500"/></svg></button>
                    </div>
                </footer>
            </main>
        </div>

        <!-- Edge sidebar -->
        <aside class="flex w-11 shrink-0 flex-col items-center pt-3">
            <button aria-label="Search"><svg class="size-[18px]" viewBox="0 0 18 18" fill="none"><circle cx="7.500" cy="7" r="5.200" stroke="#767676" stroke-width="1.800" fill="#e8eaf5"/><path d="M12 11.500l4.500 5" stroke="#9b5fd0" stroke-width="3.200"/></svg></button>
            <button class="mt-5" aria-label="Shopping"><svg class="size-[18px]" viewBox="0 0 18 18"><path d="M9 2l6-1q2 0 2 2l-.5 6-7 7.500q-1 1-2 0L1 10.500q-1-1 0-2z" fill="#3f7be0"/><path d="M1 9l8 8 7.500-8" fill="#2b5cc0"/><path d="M9 2l6-1q2 0 2 2l-.5 5L8.500 15 2 9z" fill="#568eed"/><circle cx="13.500" cy="4.800" r="1.500" fill="#fff"/></svg></button>
            <span class="mt-[21px] h-px w-7 bg-[#cbcbcb]"></span>
            <button class="mt-[26px]" aria-label="Customize"><svg class="size-3" viewBox="0 0 12 12" stroke="#1b1b1b" stroke-width="1.200"><path d="M6 0v12M0 6h12"/></svg></button>
            <span class="mt-auto h-px w-7 bg-[#cbcbcb]"></span>
            <button class="mt-[13px] mb-[13px]" aria-label="Settings"><svg class="size-[18px]" viewBox="0 0 18 18" fill="none" stroke="#1b1b1b" stroke-width="1.300" stroke-linejoin="round"><path d="M7.500 1h3l.6 2.300 1.500.9 2.300-.7 1.500 2.600L14.700 7.800v2.400l1.700 1.700-1.500 2.600-2.300-.7-1.500.9-.6 2.300h-3l-.6-2.300-1.500-.9-2.300.7-1.500-2.600 1.700-1.700V7.800L1.600 6.100l1.500-2.600 2.300.7 1.500-.9z"/><circle cx="9" cy="9" r="2.300"/></svg></button>
        </aside>
    </div>

    <!-- Taskbar -->
    <footer class="grid h-12 shrink-0 grid-cols-[1fr_auto_1fr] items-center border-t border-[#c9bfa0] bg-[linear-gradient(90deg,#fbe9cc_0%,#fcf0c0_14%,#fcf3b6_24%,#f4f5cb_30%,#f5f5c9_35%,#fcf3b8_40%,#fcedc6_50%,#fbecd0_75%,#f8e6d8_100%)]">
        <button class="ml-5 justify-self-start" aria-label="Widgets"><svg class="h-[22px] w-6" viewBox="0 0 24 22"><rect width="24" height="22" rx="1.500" fill="#0a5aa8"/><path d="M2 2h9v18H2z" fill="#f6f6f6"/><path d="M13 2h9v10h-9z" fill="#66d6fb"/><path d="M13 12h9v4h-9z" fill="#1ba0f5"/><path d="M13 16h9v4h-9z" fill="#0883ea"/></svg></button>
        <div class="flex items-center [&>button]:relative [&>button]:flex [&>button]:h-[38px] [&>button]:w-11 [&>button]:items-center [&>button]:justify-center">
            <button aria-label="Start"><svg class="size-[23px]" viewBox="0 0 23 23"><path d="M0 0h11v11H0z" fill="#35b7f5"/><path d="M12 0h11v11H12z" fill="#1da0ee"/><path d="M0 12h11v11H0z" fill="#1593e6"/><path d="M12 12h11v11H12z" fill="#0a7cd6"/></svg></button>
            <label class="mx-[3px] flex h-8 w-[218px] items-center rounded-full border border-[#e3dcc0] bg-[#fefcee] pl-2.5">
                <svg class="size-4" viewBox="0 0 16 16" fill="none" stroke="#222" stroke-width="1.800"><circle cx="7" cy="6.500" r="5.300"/><path d="M10.500 10.500l4.500 5"/></svg>
                <input type="text" placeholder="Search" aria-label="Search" class="ml-2.5 w-28 bg-transparent text-[13px] outline-none placeholder:text-[#6b6a62]">
                <svg class="ml-auto h-6 w-12" viewBox="0 0 48 24"><path d="M4 20h40l-3 4H8z" fill="#a56a2c"/><path d="M7 7q8-4 8 8 0 8-7 8-8 0-8-8 0-9 7-8z" fill="#c23027"/><path d="M24 7q8-3 8 8 0 8-8 8t-8-8q0-10 8-8z" fill="#f2b63c"/><path d="M40 7q8-3 8 8 0 8-8 8t-8-8q0-10 8-8z" fill="#80a53a"/><path d="M6 4q3-5 8-3-2 4-8 3zM30 3q5-2 8 2-5 2-8-2z" fill="#4c7f36"/><path d="M8 8V4M24 7V2M40 7V3" stroke="#5a3a1c"/><path d="M3 11q1-2 3-2M20 11q1-2 3-2M36 11q1-2 3-2" stroke="#fff" stroke-opacity=".6" stroke-width="1.500" fill="none"/></svg>
            </label>
            <button aria-label="Task view"><svg class="size-6" viewBox="0 0 24 24"><path d="M0 6h18v17H0z" fill="#2b2b2b"/><path d="M6 0h18v17H6z" fill="#f4f4f4"/><path d="M6 6h12v11H6z" fill="#bfbfbf"/></svg></button>
            <button aria-label="Teams"><svg class="size-6" viewBox="0 0 24 24"><circle cx="12.500" cy="4" r="4" fill="#7b83eb"/><circle cx="20" cy="5" r="2.800" fill="#5059c9"/><path d="M16 9h8v7q-1 4-5 4h-3z" fill="#5059c9"/><path d="M7 9h12v8q-1 6-7 6-5 0-5-5z" fill="#7b83eb"/><rect y="6" width="13" height="12" rx="1" fill="#464eb8"/><path d="M3.500 9h6M6.500 9v6.500" stroke="#fff" stroke-width="1.600"/></svg></button>
            <button aria-label="Copilot"><svg class="size-6" viewBox="0 0 24 24"><path d="M8 1h7q2 0 3 3l1 3h-4q-2 0-3 3l-3 8H4q-4 0-4-5 1-6 3-9 1-3 5-3z" fill="#2a8df0"/><path d="M1 9q-3 9 3 9h5l2-6q-5 2-10-3z" fill="#8ccb3a"/><path d="M8 1h7q2 0 3 3l1 3h-4q-1 0-2 1-1-7-5-7z" fill="#1b56c9"/><path d="M16 23H9q-2 0-3-3l-.500-2H9q2 0 3-3l3-8h5q4 0 4 5-1 6-3 9-1 2-5 2z" fill="#e2568a"/><path d="M15 7h5q4 0 4 5l-1 3q-3-3-9-3z" fill="#a95ae8"/><path d="M16 23H9q-2 0-3-3 5 1 8-2l5 3q-1 2-3 2z" fill="#f79a3c"/></svg></button>
            <button class="rounded-md border border-[#f0e2c4] bg-[#fef8ea]" aria-label="Edge"><svg class="size-6" viewBox="0 0 24 24"><circle cx="12" cy="12" r="12" fill="#1176d0"/><path d="M0 11Q1 0 12 0q11 0 12 9 0 6-6 6-4 0-4-2 2-2 0-5-5-6-14 3z" fill="#2cbfc0"/><path d="M14 1q10 2 10 9 0 5-6 5-3 0-4-2 3-6-2-9z" fill="#4dd679"/><path d="M9 11q-3 7 4 9 5 1 8-2-3 6-9 6-7 0-8-7 0-5 5-6z" fill="#0f4f9e"/><path d="M12.500 10q-3 2-1 5t6 3q-3 0-5-3-2-3 0-5z" fill="#fef8ea"/></svg><span class="absolute bottom-0 h-[3px] w-4 rounded-full bg-[#da8af3]"></span></button>
            <button aria-label="File Explorer"><svg class="size-6" viewBox="0 0 24 24"><path d="M0 3q0-2 2-2h6l2 3h12q2 0 2 2v14H0z" fill="#e8a60c"/><path d="M0 7h24v15H0z" fill="#fbd04e"/><path d="M4 23v-6q0-1 1-1h14q1 0 1 1v6z" fill="#1572c8"/><path d="M7 19h10" stroke="#0a4a92" stroke-width="2"/></svg><span class="absolute -bottom-0.5 size-1 rounded-full bg-[#8c8672]"></span></button>
            <button aria-label="Microsoft Store"><svg class="size-6" viewBox="0 0 24 24"><path d="M7 6V1h10v5" fill="none" stroke="#1c9ff0" stroke-width="2"/><rect x="1" y="4" width="22" height="19" rx="2" fill="#1a4b84"/><path d="M7 9h4.500v4.500H7z" fill="#f25022"/><path d="M12.500 9H17v4.500h-4.500z" fill="#7fba00"/><path d="M7 14.500h4.500V19H7z" fill="#00a4ef"/><path d="M12.500 14.500H17V19h-4.500z" fill="#ffb900"/></svg></button>
            <button aria-label="Outlook"><svg class="size-6" viewBox="0 0 24 24"><path d="M5 6l9-6 10 6v15q0 2-2 2H7q-2 0-2-2z" fill="#1a86d8"/><path d="M24 9v12q0 2-2 2H7q-2 0-2-2l11-8z" fill="#4cc2f5"/><path d="M24 6v4l-11 6-3-8 8-6z" fill="#1364b8"/><rect y="6" width="13" height="13" rx="1.500" fill="#0f6cbd"/><circle cx="6.500" cy="12.500" r="3.300" fill="none" stroke="#fff" stroke-width="1.800"/></svg></button>
            <button aria-label="Amazon"><svg class="size-6" viewBox="0 0 24 24"><rect width="24" height="24" fill="#fff"/><text x="12" y="15" font-size="15" font-weight="700" fill="#111" text-anchor="middle">a</text><path d="M7 16.500q5 3.500 10 0" stroke="#f79c1c" stroke-width="1.600" fill="none"/></svg></button>
            <button aria-label="Dropbox"><svg class="size-6" viewBox="0 0 24 24"><path d="M6 1.500l6 4-6 4-6-4zM18 1.500l6 4-6 4-6-4zM6 9.500l6 4-6 4-6-4zM18 9.500l6 4-6 4-6-4zM6 18.500l6-4 6 4-6 4z"/></svg></button>
            <button aria-label="Stripo"><svg class="size-6" viewBox="0 0 24 24"><rect width="24" height="24" fill="#dc8cf2"/><path d="M15 1L6 12l7 1-4 10 9-12-6-1z" fill="#fff"/></svg></button>
            <button aria-label="Webex"><svg class="size-6" viewBox="0 0 24 24"><rect width="24" height="24" rx="5" fill="#121212"/><g fill="none" stroke-width="3.400"><path d="M8 6Q4 4 3.500 9T7 17.500q3 1 5-5" stroke="#2e7cf6"/><path d="M16 6q4-2 4.500 3T17 17.500q-3 1-5-5T8 6" stroke="#2b5be8"/><path d="M12 12.500Q13 6 16 5.500q4 0 4.300 4" stroke="#35d07c"/></g></svg><span class="absolute -bottom-0.5 size-1 rounded-full bg-[#8c8672]"></span></button>
            <button aria-label="Word"><svg class="size-6" viewBox="0 0 24 24"><rect x="5" y="1" width="19" height="21" rx="1.500" fill="#185abd"/><path d="M5 1h19v6H5z" fill="#41a5ee"/><path d="M5 7h19v5H5z" fill="#2b7cd3"/><path d="M5 17h19v5H5z" fill="#103f91"/><rect y="5" width="13" height="13" rx="1" fill="#1550b0"/><path d="M2.500 8.500l1.700 6 2.300-5.500 2.300 5.500 1.700-6" stroke="#fff" stroke-width="1.400" fill="none"/></svg><span class="absolute -bottom-0.5 size-1 rounded-full bg-[#8c8672]"></span></button>
        </div>
        <div class="mr-5 flex items-center justify-self-end">
            <button aria-label="Hidden icons"><svg class="size-2.5" viewBox="0 0 10 10" fill="none" stroke="#1b1b1b" stroke-width="1.400"><path d="M.5 7.500L5 2.500l4.500 5"/></svg></button>
            <svg class="ml-[19px] h-3 w-4" viewBox="0 0 16 12"><path d="M4 11Q.7 11 .7 8T3.500 5Q4.500 1 8 1t4.500 4Q15.300 5.500 15.300 8T12 11z" fill="#8a8a86" stroke="#2b2b2b" stroke-width="1.200"/><path d="M4 11l3-4 5-2q3 1 3 3t-3 3z" fill="#d8d8d4"/></svg>
            <svg class="ml-4 size-[17px]" viewBox="0 0 17 17" fill="none" stroke="#1b1b1b" stroke-width="1.200"><path d="M10 2.500H3q-1.500 0-1.500 1.500v7.500q0 1.500 1.500 1.500h11V7M6 13v3M10 13v3M4 16h8"/><rect x="12" y=".8" width="4" height="5" rx="1"/></svg>
            <svg class="ml-2 size-[15px]" viewBox="0 0 15 15" fill="none" stroke="#1b1b1b" stroke-width="1.100"><path d="M.7 5h2.500L7 1.500v12L3.200 10H.7z"/><path d="M9 5q1.500 2.500 0 5"/><path d="M11 3q3 4.500 0 9M13 1q3.500 6.500 0 13" stroke="#b0a896"/></svg>
            <div class="ml-4 text-right text-xs leading-4">9:02 PM<br>9/20/2024</div>
            <svg class="ml-2 h-4 w-3.5" viewBox="0 0 14 16"><path d="M7 0q5 0 5 5v4l2 3.500H0L2 9V5q0-5 5-5zM4.500 13.500h5Q9 16 7 16t-2.500-2.500z" fill="#d052ee"/></svg>
        </div>
    </footer>

    <script>
        // open tabs, left to right; a leading "!" marks a tab that is still awake
        const tabs = `!mgh !mgh !q !gao !corange !mgh !q oval !shield !search !gmail hearts gg ic flag vp ic tri dd !doc oval hearts hearts oval ii oval
            doc gasb shield cookie grapes shield nn rr cblue !gmail crest rbox doc rr xm crestbox rr mm tshield compassbox compass yt swirl yt gmail aa
            cdark cdark sbox sbox mount canvas oval search ee ms ms doc search vp search doc sbox google ms vred uis ww rr lu crown search doc search
            n529 vb yt !face !google`.split(/\s+/);
        document.getElementById('tabs').innerHTML = tabs.map((name, i) => {
            const width = i < 4 ? 'w-[19px]' : 'w-[18px]';
            const fade = name[0] === '!' ? '' : 'opacity-50';
            return `<button class="${width} h-6 flex items-center justify-center border-r border-[#7d7d7d]" aria-label="Tab ${i + 3}"><svg class="size-4 ${fade}"><use href="#${name.replace('!', '')}"/></svg></button>`;
        }).join('');
    </script>
</body>
</html>
